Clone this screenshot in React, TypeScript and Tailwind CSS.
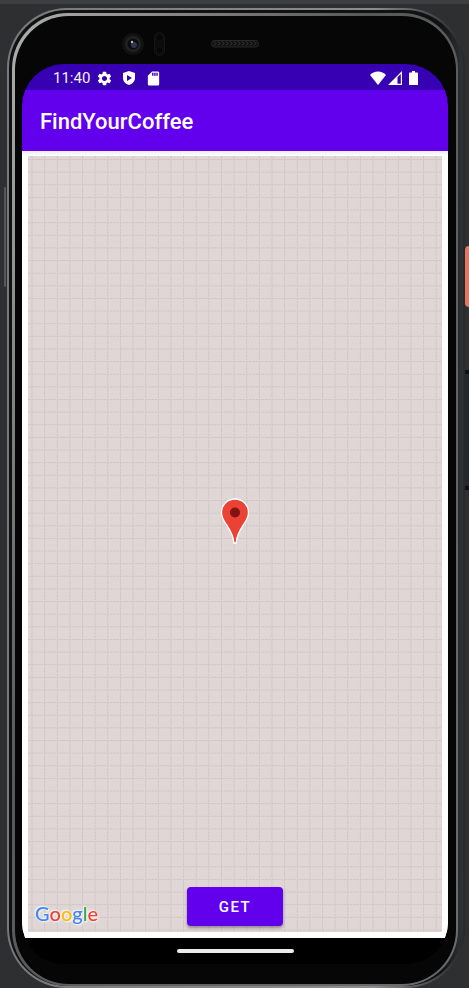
import React from "react";
import { MdSettings, MdSdCard } from "react-icons/md";

function ShieldIcon() {
  return (
    <svg viewBox="0 0 12 14" className="h-3.5 w-3" aria-hidden="true">
      <path fill="#fff" fillRule="evenodd" d="M6 0 0 2v5c0 3.300 2.500 6 6 7 3.500-1 6-3.700 6-7V2L6 0Zm-2 4v6l5-3-5-3Z" />
    </svg>
  );
}

function WifiIcon() {
  return (
    <svg viewBox="0 0 16 14" className="h-3.5 w-4" aria-hidden="true">
      <path fill="#fff" d="M8 14 0 4C2 1.800 4.800.600 8 .600S14 1.800 16 4L8 14Z" />
    </svg>
  );
}

function SignalIcon() {
  return (
    <svg viewBox="0 0 14 14" className="h-3.5 w-3.5" aria-hidden="true">
      <path fill="#fff" fillRule="evenodd" d="M14 0v14H0L14 0Zm-1.200 3L9.500 6.300v6.500h3.300V3Z" />
    </svg>
  );
}

function BatteryIcon() {
  return (
    <svg viewBox="0 0 9 14" className="h-3.5 w-[9px]" aria-hidden="true">
      <path fill="#fff" d="M3 0h3v1.500h2.500L9 2v12H0V2l.5-.5H3V0Z" />
    </svg>
  );
}

function MapPin() {
  return (
    <svg viewBox="0 0 30 46" className="h-[46px] w-[30px]" role="img" aria-label="Selected place">
      <path
        fill="#ea4335"
        stroke="#fff"
        strokeWidth="1.300"
        d="M15 1C7.300 1 1.500 7 1.500 14.500c0 4.500 2 8 4.800 11.800C10 32 13.800 37.500 13.800 45h2.400c0-7.500 3.800-13 7.500-18.700 2.800-3.800 4.800-7.300 4.800-11.800C28.500 7 22.700 1 15 1Z"
      />
      <circle cx="15" cy="14.500" r="5" fill="#811411" />
    </svg>
  );
}

function MapGrid() {
  return (
    <svg className="absolute inset-0 h-full w-full" aria-hidden="true">
      <defs>
        <pattern id="tile" x="3.500" y="3" width="12.630" height="12.630" patternUnits="userSpaceOnUse">
          <path d="M.5 0V12.630M0 .5H12.630" stroke="#cbc3c2" strokeWidth="1" strokeDasharray="2.100 1.060" fill="none" />
        </pattern>
      </defs>
      <rect width="100%" height="100%" fill="url(#tile)" />
    </svg>
  );
}

function Camera() {
  return (
    <svg viewBox="0 0 22 22" className="h-[22px] w-[22px]" aria-hidden="true">
      <circle cx="11" cy="11" r="11" fill="#111" />
      <circle cx="11" cy="11" r="8" fill="#222223" />
      <circle cx="11" cy="11" r="5.500" fill="#0b0c10" />
      <circle cx="12" cy="12" r="3" fill="#30364e" />
      <circle cx="10" cy="9" r="1.200" fill="#b9b9bd" />
    </svg>
  );
}

function Sensor() {
  return (
    <svg viewBox="0 0 11 24" className="h-6 w-[11px]" aria-hidden="true">
      <rect x=".5" y=".5" width="10" height="23" rx="5" fill="#0c0c0c" stroke="#171717" />
      <circle cx="5.500" cy="5.500" r="3.500" fill="#060606" stroke="#131313" />
      <circle cx="5.500" cy="18" r="3.500" fill="#060606" stroke="#131313" />
    </svg>
  );
}

function Speaker() {
  return (
    <svg viewBox="0 0 48 8" className="h-2 w-12" aria-hidden="true">
      <rect x=".5" y=".5" width="47" height="6.500" rx="3" fill="#111" stroke="#292929" />
      {Array.from({ length: 11 }, (_, i) => (
        <path key={i} d={`M${3 + i * 4} 1.500l2 2-2 2`} stroke="#3d3d3d" fill="none" />
      ))}
    </svg>
  );
}

function StatusBar() {
  return (
    <div className="flex h-[26px] shrink-0 items-center justify-between bg-[#3700b3] pl-[31px] pr-[30px] pt-0.5 text-[#f2effa]">
      <div className="flex items-center">
        <time className="text-[15px] leading-none">11:40</time>
        <MdSettings className="ml-1.5 size-[17px] text-white" />
        <span className="ml-2.5"><ShieldIcon /></span>
        <MdSdCard className="ml-2.5 size-[17px] text-white" />
      </div>
      <div className="flex items-center">
        <WifiIcon />
        <span className="ml-0.5"><SignalIcon /></span>
        <span className="ml-[7px]"><BatteryIcon /></span>
      </div>
    </div>
  );
}

function GoogleMark() {
  return (
    <div
      aria-label="Google"
      className="absolute bottom-[5px] left-[7px] font-['Lato',sans-serif] text-[20px] font-medium leading-7 [filter:drop-shadow(1px_1px_0_#f3eeee)_drop-shadow(-1px_-1px_0_#f3eeee)_drop-shadow(0_0_1px_#f3eeee)]"
    >
      <span className="text-[#4285f4]">G</span>
      <span className="text-[#ea4335]">o</span>
      <span className="text-[#fbbc05]">o</span>
      <span className="text-[#4285f4]">g</span>
      <span className="text-[#34a853]">l</span>
      <span className="text-[#ea4335]">e</span>
    </div>
  );
}

function Screen() {
  return (
    <main className="flex flex-1 flex-col overflow-hidden rounded-[42px] bg-black">
      <StatusBar />
      <header className="flex h-[61px] shrink-0 items-center bg-[#6200ee] px-[18px] pt-0.5">
        <h1 className="text-[22px] font-medium leading-7 text-white">FindYourCoffee</h1>
      </header>
      <div className="flex flex-1 flex-col bg-white bg-linear-to-b from-[#ececec] to-white to-[5px] px-[6px] pb-[6px] pt-[5px]">
        <section aria-label="Map" className="relative flex flex-1 flex-col bg-[#dfd6d5]">
          <MapGrid />
          <div className="absolute left-1/2 top-1/2 -translate-x-1/2 -translate-y-full">
            <MapPin />
          </div>
          <GoogleMark />
          <button
            type="button"
            className="relative mx-auto mb-1.5 mt-auto h-[39px] w-24 rounded bg-[#6200ee] pt-0.5 text-[15px] font-medium tracking-widest text-white shadow-[0_2px_3px_rgba(0,0,0,0.35)]"
          >
            GET
          </button>
        </section>
      </div>
      <div className="flex h-[26px] shrink-0 items-center justify-center bg-black">
        <span className="h-1 w-[117px] rounded-full bg-[#eeeaea]" />
      </div>
    </main>
  );
}

export default function App() {
  return (
    <div className="flex h-screen min-h-[640px] flex-col overflow-hidden border-t-4 border-[#3c3f41] bg-[#2e2f31] pl-[7px] pr-1 pt-1 font-['Roboto',sans-serif]">
      <div className="relative flex flex-1 flex-col">
        <span className="absolute -left-[3px] top-[179px] h-[100px] w-0.5 rounded bg-[#55575a]" />
        <span className="absolute -right-1 top-[238px] h-[61px] w-1 rounded-l-sm bg-[#e47663]" />
        <span className="absolute -right-1 top-[362px] h-[120px] w-1 border-y-4 border-[#101112] bg-[#25282a]" />
        <div className="flex flex-1 flex-col rounded-[60px] bg-linear-to-r from-[#77797c] via-[#8b8d90] via-80% to-[#27292b] p-0.5">
          <div className="flex flex-1 flex-col rounded-[58px] bg-linear-to-r from-[#101113] from-95% to-[#303335] pl-[3px] pr-[5px] pt-[3px]">
            <div className="flex flex-1 flex-col rounded-[56px] bg-linear-to-br from-[#b0b0ad] via-[#575858] via-40% to-[#6c6d6e] pb-0.5 pl-[3px] pr-0.5 pt-[3px]">
              <div className="flex flex-1 flex-col rounded-[54px] bg-[#060607] pb-5 pl-[7px] pr-2">
                <div className="grid h-12 shrink-0 grid-cols-[1fr_48px_1fr] items-center pt-2">
                  <div className="flex items-center justify-end gap-2.5 pr-[46px]">
                    <Camera />
                    <Sensor />
                  </div>
                  <Speaker />
                </div>
                <Screen />
              </div>
            </div>
          </div>
        </div>
      </div>
    </div>
  );
}
